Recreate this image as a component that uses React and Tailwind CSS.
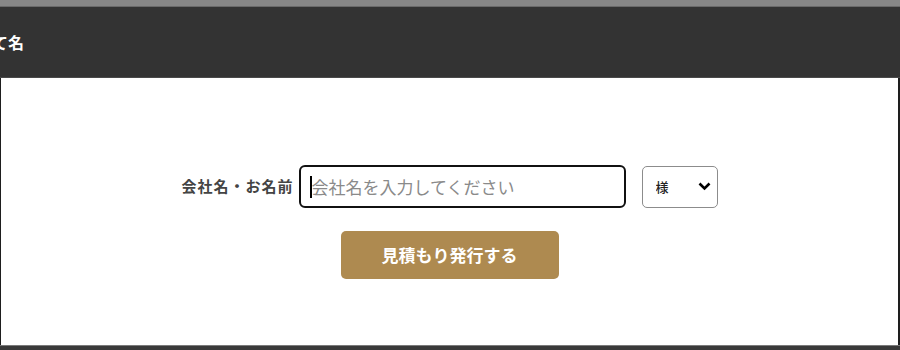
import { useState } from "react";

const jp = { fontFamily: '"Noto Sans CJK JP", "Noto Sans", sans-serif' };

const App = () => {
  const [name, setName] = useState("");
  const [suffix, setSuffix] = useState("様");

  return (
    <div className="w-[900px] h-[350px] flex flex-col overflow-hidden bg-white" style={jp}>
      {/* window top strip */}
      <div className="h-[7px] bg-[#878787] border-b border-[#6a6a6a]" />

      {/* Header */}
      <header className="h-[71px] bg-[#333333] border-b border-[#4a4a4a] flex items-center overflow-hidden">
        <h1 className="-ml-[8px] text-white text-[16px] font-bold whitespace-nowrap">て名</h1>
      </header>

      {/* Form */}
      <main className="flex-1 bg-white border-l border-r-2 border-[#1e1e1e] flex flex-col items-center pt-[87px]">
        <div className="flex items-center">
          <label className="text-[15px] font-bold text-[#444444] tracking-[1px] mr-[5px]">
            会社名・お名前
          </label>
          <div className="relative">
            <input
              type="text"
              value={name}
              onChange={(e) => setName(e.target.value)}
              placeholder="会社名を入力してください"
              className="w-[327px] h-[43px] rounded-[6px] border-2 border-[#111111] pl-[11px] text-[17px] text-[#333] placeholder:text-[#8a8a8a] outline-none"
            />
            {/* caret */}
            <span className="absolute left-[11px] top-[11px] w-[2px] h-[22px] bg-black" />
          </div>
          <div className="relative ml-[16px]">
            <select
              value={suffix}
              onChange={(e) => setSuffix(e.target.value)}
              className="appearance-none w-[76px] h-[42px] rounded-[5px] border border-[#8c8c8c] bg-white pl-[13px] text-[13px] font-medium text-[#222] outline-none"
            >
              <option value="様">様</option>
              <option value="御中">御中</option>
            </select>
            <svg
              className="absolute right-[7px] top-[16px] pointer-events-none"
              width="13"
              height="9"
              viewBox="0 0 13 9"
            >
              <path d="M1.5 1.5 L6.5 6.5 L11.5 1.5" fill="none" stroke="#000" strokeWidth="2.6" />
            </svg>
          </div>
        </div>

        <button className="mt-[23px] w-[218px] h-[48px] rounded-[5px] bg-[#ae8a50] text-white text-[17px] font-bold">
          見積もり発行する
        </button>
      </main>

      {/* window bottom strip */}
      <div className="h-[5px] bg-[#3a3a3a] border-t border-[#7a7a7a]" />
    </div>
  );
};

export default App;
